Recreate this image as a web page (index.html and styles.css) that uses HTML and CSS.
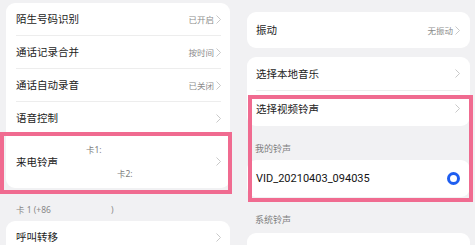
FILE: index.html
```html
<!DOCTYPE html>
<html lang="zh-CN">
<head>
    <meta charset="UTF-8">
    <meta name="viewport" content="width=device-width, initial-scale=1.0">
    <title>来电铃声</title>
    <link rel="stylesheet" href="styles.css">
</head>
<body>
    <div class="shots">
        <!-- call settings -->
        <div class="pane pane-left">
            <div class="card">
                <div class="row">
                    <span class="title">陌生号码识别</span>
                    <span class="value">已开启</span>
                    <svg class="chev" viewBox="0 0 5 9"><polyline points="0.5,0.5 4.5,4.5 0.5,8.5"/></svg>
                </div>
                <div class="row">
                    <span class="title">通话记录合并</span>
                    <span class="value">按时间</span>
                    <svg class="chev" viewBox="0 0 5 9"><polyline points="0.5,0.5 4.5,4.5 0.5,8.5"/></svg>
                </div>
                <div class="row">
                    <span class="title">通话自动录音</span>
                    <span class="value">已关闭</span>
                    <svg class="chev" viewBox="0 0 5 9"><polyline points="0.5,0.5 4.5,4.5 0.5,8.5"/></svg>
                </div>
                <div class="row">
                    <span class="title">语音控制</span>
                    <svg class="chev" viewBox="0 0 5 9"><polyline points="0.5,0.5 4.5,4.5 0.5,8.5"/></svg>
                </div>
                <div class="row row-tall">
                    <span class="title">来电铃声</span>
                    <div class="sims">
                        <span>卡1:</span>
                        <span class="sim2">卡2:</span>
                    </div>
                    <svg class="chev" viewBox="0 0 5 9"><polyline points="0.5,0.5 4.5,4.5 0.5,8.5"/></svg>
                    <div class="mark mark-left"></div>
                </div>
            </div>

            <div class="caption">卡 1 (+86<span class="masked"></span>)</div>

            <div class="card">
                <div class="row">
                    <span class="title">呼叫转移</span>
                    <svg class="chev" viewBox="0 0 5 9"><polyline points="0.5,0.5 4.5,4.5 0.5,8.5"/></svg>
                </div>
            </div>
        </div>

        <!-- ringtone picker -->
        <div class="pane pane-right">
            <div class="card card-first">
                <div class="row row-vib">
                    <span class="title">振动</span>
                    <span class="value">无振动</span>
                    <svg class="chev" viewBox="0 0 5 9"><polyline points="0.5,0.5 4.5,4.5 0.5,8.5"/></svg>
                </div>
            </div>

            <div class="card">
                <div class="row row-local">
                    <span class="title">选择本地音乐</span>
                    <svg class="chev" viewBox="0 0 5 9"><polyline points="0.5,0.5 4.5,4.5 0.5,8.5"/></svg>
                </div>
                <div class="row row-video">
                    <span class="title">选择视频铃声</span>
                    <svg class="chev" viewBox="0 0 5 9"><polyline points="0.5,0.5 4.5,4.5 0.5,8.5"/></svg>
                </div>
            </div>

            <div class="label">我的铃声</div>
            <div class="card">
                <div class="row row-tone">
                    <span class="title file">VID_20210403_094035</span>
                    <span class="radio radio-on"></span>
                </div>
            </div>

            <div class="label">系统铃声</div>
            <div class="card">
                <div class="row row-sys">
                    <span class="title"></span>
                    <span class="radio"></span>
                </div>
            </div>

            <div class="mark mark-right"></div>
        </div>
    </div>
</body>
</html>
```

FILE: styles.css
```css
body {
    margin: 0;
    background-color: #f1f1f3;
    font-family: "Noto Sans", "Noto Sans CJK SC", sans-serif;
    color: #1c1c1c;
    overflow: hidden;
}
.shots {
    display: flex;
    width: 475px;
    height: 245px;
    overflow: hidden;
}
.pane {
    position: relative;
}
.pane-left {
    width: 238px;
    padding-left: 6px;
    box-sizing: border-box;
}
.pane-right {
    flex: 1;
    padding-left: 9px;
}
.card {
    position: relative;
    width: 224px;
    background-color: white;
    border-radius: 9px;
    padding: 0 9px 0 10px;
    box-sizing: border-box;
}
.pane-left .card:first-child {
    margin-top: 3px;
}
.pane-right .card {
    width: 223px;
    padding: 0 10px 0 9px;
}
.row {
    position: relative;
    display: flex;
    align-items: center;
    height: 32px;
    border-bottom: 1px solid #ededed;
}
.row:last-child {
    border-bottom: none;
}
.row-tall {
    height: 53px;
}
.title {
    font-size: 10.5px;
    line-height: 12px;
    flex: 1;
    white-space: nowrap;
}
.row-tall .title {
    flex: none;
}
.value {
    font-size: 8.5px;
    color: #8c8c8c;
    margin-right: 2px;
}
.chev {
    width: 5px;
    height: 9px;
    fill: none;
    stroke: #c3c3c3;
    stroke-width: 0.9;
}
.sims {
    flex: 1;
    display: flex;
    flex-direction: column;
    gap: 14px;
    margin-left: 28px;
    margin-top: 1px;
    font-size: 8.5px;
    line-height: 10px;
    color: #7d7d7d;
}
.sim2 {
    padding-left: 31px;
}
.caption {
    padding: 16px 0 0 10px;
    margin-bottom: 6px;
    font-size: 8.5px;
    line-height: 11px;
    color: #888;
}
.masked {
    display: inline-block;
    width: 60px;
}

/* right pane */
.card-first {
    margin-top: 12px;
    margin-bottom: 9px;
}
.row-vib {
    height: 36px;
}
.row-local {
    height: 33px;
}
.row-video {
    height: 35px;
}
.row-tone {
    height: 37px;
}
.row-sys {
    height: 26px;
    align-items: flex-end;
}
.label {
    padding: 18px 0 6px 8px;
    font-size: 9px;
    line-height: 10px;
    color: #7f7f7f;
}
.label + .card + .label {
    padding-bottom: 8px;
}
.file {
    font-family: Roboto, "Noto Sans", sans-serif;
    font-size: 11px;
    color: #141414;
}
.radio {
    width: 11px;
    height: 11px;
    border: 1px solid #bdbdbd;
    border-radius: 50%;
}
.row-sys .radio {
    margin-bottom: -8px;
}
.radio-on {
    width: 7px;
    height: 7px;
    border: 3px solid #1f5ef0;
}

/* pink highlight boxes drawn over the screenshot */
.mark {
    position: absolute;
    border: 4px solid #f06b90;
    box-sizing: border-box;
    pointer-events: none;
}
.mark-left {
    left: -16px;
    top: -3px;
    width: 232px;
    height: 62px;
}
.mark-right {
    left: 10px;
    top: 95px;
    width: 225px;
    height: 107px;
}
```
